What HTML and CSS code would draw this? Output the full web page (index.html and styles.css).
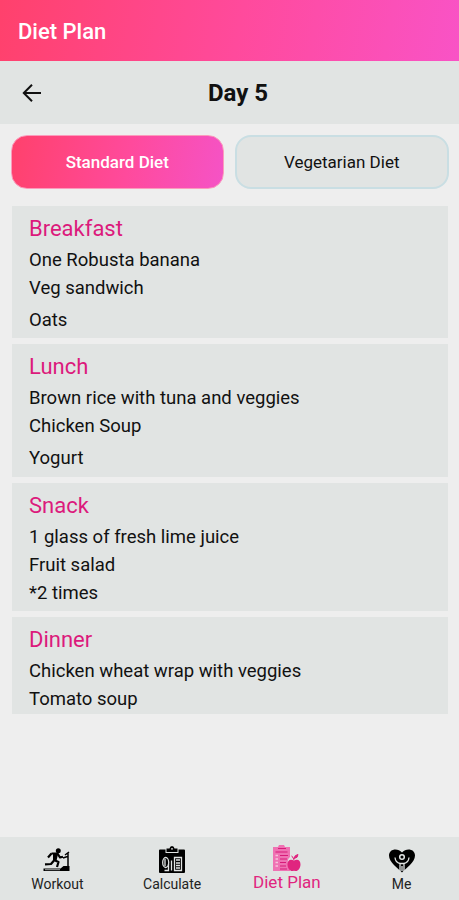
FILE: index.html
```html
<!DOCTYPE html>
<html lang="en">
<head>
  <meta charset="UTF-8">
  <meta name="viewport" content="width=device-width, initial-scale=1">
  <title>Diet Plan</title>
  <link rel="stylesheet" href="styles.css">
</head>
<body>
  <header class="topbar"><span>Diet Plan</span></header>

  <div class="daybar">
    <button class="back" aria-label="Back">
      <svg width="20" height="20" viewBox="0 0 20 20"><path d="M19 10H2M10 1.8L1.8 10l8.200 8.200" fill="none" stroke="#111" stroke-width="2"/></svg>
    </button>
    <h1><span>Day 5</span></h1>
  </div>

  <div class="tabs">
    <button class="tab active"><span>Standard Diet</span></button>
    <button class="tab"><span>Vegetarian Diet</span></button>
  </div>

  <main class="meals">
    <section class="meal">
      <h2><span class="w-breakfast">Breakfast</span></h2>
      <p>One Robusta banana</p>
      <p>Veg sandwich</p>
      <p class="extra">Oats</p>
    </section>
    <section class="meal tall">
      <h2>Lunch</h2>
      <p>Brown rice with tuna and veggies</p>
      <p>Chicken Soup</p>
      <p class="extra">Yogurt</p>
    </section>
    <section class="meal">
      <h2>Snack</h2>
      <p>1 glass of fresh lime juice</p>
      <p>Fruit salad</p>
      <p>*2 times</p>
    </section>
    <section class="meal last">
      <h2>Dinner</h2>
      <p>Chicken wheat wrap with veggies</p>
      <p>Tomato soup</p>
    </section>
  </main>

  <nav class="bottom">
    <a class="item">
      <!-- runner on treadmill -->
      <svg width="28" height="28" viewBox="0 0 28 28">
        <circle cx="15.300" cy="4.800" r="2.500"/>
        <path d="M8.500 7.500h6l2.500 4 3-.8M13.500 8l-2.500 6 4.500 2-1.500 5M11 14.500l-3 3.500-6 .3M8.500 7.500L5 11.500" fill="none" stroke="currentColor" stroke-width="2.200" stroke-linejoin="round"/>
        <path d="M10 8h5l-1.500 7-3.500-1z"/>
        <path d="M.5 22.500h17l3-2.500h6v5H.5z"/>
        <path d="M25 20.500V7M22 9l4-3M24.500 10.500L20 12" fill="none" stroke="currentColor" stroke-width="1.500"/>
        <path d="M2 23.700h15" stroke="#e1e4e3" stroke-width=".7"/>
      </svg>
      <span>Workout</span>
    </a>
    <a class="item">
      <!-- clipboard with tape and calculator -->
      <svg width="28" height="28" viewBox="0 0 28 28">
        <path d="M2 3.500h5.500V7h13V3.500H26q1 0 1 1V26q0 1-1 1H2q-1 0-1-1V4.500q0-1 1-1z"/>
        <path d="M8.500 2.500h3q.3-2.500 2.500-2.500t2.500 2.500h3V6h-11z"/>
        <circle cx="14" cy="2.800" r=".9" fill="#e1e4e3"/>
        <g fill="none" stroke="#e1e4e3" stroke-width="1.300">
          <ellipse cx="7.700" cy="16.500" rx="3" ry="5"/>
          <path d="M7 13v7M10.500 18v6.500H6.500M13.500 14.500v10"/>
          <path d="M16.500 11.500h7v13h-7z"/>
          <path d="M18 14h4M18 17h4M18 19.500h4M18 22h4"/>
        </g>
      </svg>
      <span>Calculate</span>
    </a>
    <a class="item selected">
      <!-- diet list with apple -->
      <svg width="29" height="28" viewBox="0 0 29 28">
        <path d="M1 3h5l1-2h5l1 2h5v10q-3 2-2 7 .5 3 2 5.500V27H1z" fill="#ef72b3"/>
        <path d="M6 4.500h8M3.500 8h12M8 11.500h8M8 15h7M8 18.500h6M8 22h6M8 25h7" fill="none" stroke="#d81b7a" stroke-width="1.200"/>
        <path d="M3.500 11.500h2.500M3.500 15h2.500M3.500 18.500h2.500M3.500 22h2.500" stroke="#f6c3dc" stroke-width="1.300"/>
        <path d="M22 16.500c-4-2-6.500 0-6.500 4 0 4 3 7 5 6.500q1.500-.4 3 0c2 .5 5-2.500 5-6.500s-2.500-6-6.500-4z" fill="#e0257f"/>
        <path d="M22 16q-.5-3-2.500-4M22 14.500q.5-3.500 4-4 0 3.500-4 4z" fill="#e0257f" stroke="#e0257f" stroke-width="1"/>
      </svg>
      <span>Diet Plan</span>
    </a>
    <a class="item">
      <!-- heart with person -->
      <svg width="28" height="28" viewBox="0 0 28 28">
        <path d="M14 26.500C10 22 1 16.500 1 9.500 1 2.500 10 1.500 14 6.500 18 1.500 27 2.500 27 9.500c0 7-9 12.500-13 17z"/>
        <circle cx="14" cy="11" r="2.300" fill="none" stroke="#e1e4e3" stroke-width="1.500"/>
        <path d="M7 11.500q.5 5 5 6v8M21 11.500q-.5 5-5 6v8M12 17.500h4M14 20v5" fill="none" stroke="#e1e4e3" stroke-width="1.300"/>
      </svg>
      <span>Me</span>
    </a>
  </nav>
</body>
</html>
```
FILE: styles.css
```css
* {
  box-sizing: border-box;
}
body {
  margin: 0;
  height: 100vh;
  display: flex;
  flex-direction: column;
  background: #eeeeee;
  color: #111;
  font-family: Roboto, sans-serif;
}
h1, h2, p {
  margin: 0;
}
button {
  border: none;
  background: none;
  padding: 0;
  font-family: inherit;
}
.topbar {
  height: 61px;
  padding: 2px 18px 0;
  display: flex;
  align-items: center;
  background: linear-gradient(100deg, #ff416c, #ff4a9c 52%, #f953c6);
  color: #fff;
  font-size: 22px;
  font-weight: 500;
}
.daybar {
  height: 63px;
  display: grid;
  grid-template-columns: 60px 1fr 43px;
  align-items: center;
  background: #e1e4e3;
}
.back {
  display: flex;
  padding-left: 22px;
}
.daybar h1 {
  text-align: center;
  font-size: 24px;
  font-weight: 700;
}
.tabs {
  display: flex;
  gap: 11px;
  padding: 11px 10px 0 11px;
}
.tab {
  flex: 1;
  height: 54px;
  border: 2px solid #c9dee3;
  border-radius: 16px;
  background: #e1e4e3;
  color: #111;
  font-size: 17px;
}
.tab.active {
  border: 1px solid #fb9cbc;
  background: linear-gradient(100deg, #ff416c, #ff4a9c 55%, #f553c6);
  color: #fff;
  font-weight: 500;
}
.meals {
  flex: 1;
  display: flex;
  flex-direction: column;
  gap: 6px;
  padding: 17px 11px 0 12px;
}
.meal {
  padding: 8px 17px 4px;
  background: #e1e4e3;
}
.meal.tall {
  padding-bottom: 5px;
}
.meal.last {
  padding-bottom: 1px;
}
.meal h2 {
  margin-bottom: 2px;
  line-height: 30px;
  font-size: 22px;
  font-weight: 400;
  color: #dc1a7c;
}
.meal p {
  line-height: 28px;
  font-size: 18.500px;
}
.meal .extra {
  margin-top: 4px;
}
.bottom {
  height: 63px;
  display: flex;
  background: #e1e4e3;
}
.item {
  flex: 1;
  display: flex;
  flex-direction: column;
  align-items: center;
  padding-top: 9px;
  font-size: 14px;
  color: #222;
}
.item svg {
  fill: #000;
  color: #000;
}
.item span {
  margin-top: 2px;
  line-height: 16px;
}
.item.selected {
  padding-top: 7px;
  font-size: 17px;
  color: #e0257f;
}
```
